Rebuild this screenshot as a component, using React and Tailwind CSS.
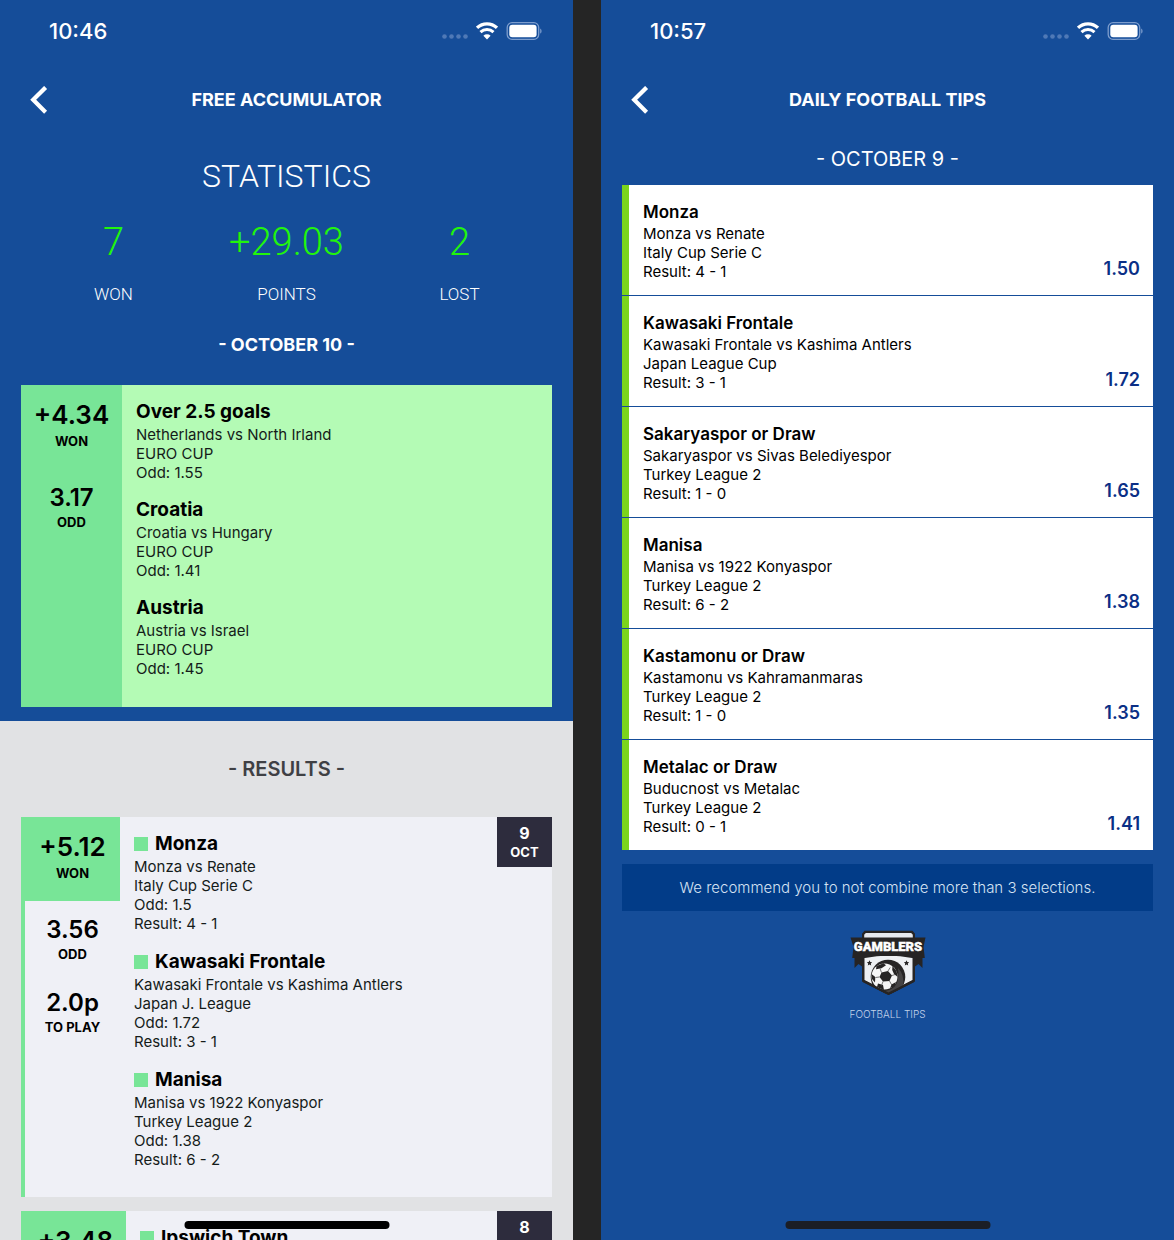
import React from "react";

const accumulator = [
  { title: "Over 2.5 goals", lines: ["Netherlands vs North Irland", "EURO CUP", "Odd: 1.55"] },
  { title: "Croatia", lines: ["Croatia vs Hungary", "EURO CUP", "Odd: 1.41"] },
  { title: "Austria", lines: ["Austria vs Israel", "EURO CUP", "Odd: 1.45"] },
];

const results = [
  {
    won: "+5.12",
    odd: "3.56",
    stake: "2.0p",
    day: "9",
    month: "OCT",
    column: "w-[99px]",
    picks: [
      { title: "Monza", lines: ["Monza vs Renate", "Italy Cup Serie C", "Odd: 1.5", "Result: 4 - 1"] },
      { title: "Kawasaki Frontale", lines: ["Kawasaki Frontale vs Kashima Antlers", "Japan J. League", "Odd: 1.72", "Result: 3 - 1"] },
      { title: "Manisa", lines: ["Manisa vs 1922 Konyaspor", "Turkey League 2", "Odd: 1.38", "Result: 6 - 2"] },
    ],
  },
  {
    won: "+3.48",
    day: "8",
    month: "OCT",
    column: "w-[105px]",
    picks: [{ title: "Ipswich Town", lines: [] }],
  },
];

const tips = [
  { title: "Monza", lines: ["Monza vs Renate", "Italy Cup Serie C", "Result: 4 - 1"], odd: "1.50" },
  { title: "Kawasaki Frontale", lines: ["Kawasaki Frontale vs Kashima Antlers", "Japan League Cup", "Result: 3 - 1"], odd: "1.72" },
  { title: "Sakaryaspor or Draw", lines: ["Sakaryaspor vs Sivas Belediyespor", "Turkey League 2", "Result: 1 - 0"], odd: "1.65" },
  { title: "Manisa", lines: ["Manisa vs 1922 Konyaspor", "Turkey League 2", "Result: 6 - 2"], odd: "1.38" },
  { title: "Kastamonu or Draw", lines: ["Kastamonu vs Kahramanmaras", "Turkey League 2", "Result: 1 - 0"], odd: "1.35" },
  { title: "Metalac or Draw", lines: ["Buducnost vs Metalac", "Turkey League 2", "Result: 0 - 1"], odd: "1.41" },
];

function StatusBar({ time }) {
  return (
    <div className="flex h-[62px] shrink-0 items-center justify-between pl-[49px] pr-[31px] text-white">
      <span className="text-[22px] leading-7 font-medium">{time}</span>
      <div className="flex items-center gap-2">
        <svg width="26" height="20" viewBox="0 0 26 20" fill="#4f79b6" aria-hidden="true">
          <circle cx="2.5" cy="15.5" r="2.3" />
          <circle cx="9.5" cy="15.5" r="2.3" />
          <circle cx="16.5" cy="15.5" r="2.3" />
          <circle cx="23.5" cy="15.5" r="2.3" />
        </svg>
        <svg width="22" height="20" viewBox="0 0 22 20" fill="none" stroke="#fff" aria-hidden="true">
          <path d="M1 6.800a14.600 14.600 0 0 1 20 0" strokeWidth="3.4" />
          <path d="M4.500 11.200a9.400 9.400 0 0 1 13 0" strokeWidth="3" />
          <path d="M11 18.400 7.400 14.800a5.200 5.200 0 0 1 7.200 0z" fill="#fff" stroke="none" />
        </svg>
        <svg width="36" height="20" viewBox="0 0 36 20" fill="none" aria-hidden="true">
          <rect x="1.2" y="1.700" width="31.500" height="16.600" rx="4.8" stroke="#7d9dcd" strokeWidth="1.3" />
          <rect x="3.300" y="3.800" width="27.300" height="12.400" rx="3" fill="#fff" />
          <path d="M34.200 7.400c1.800.8 1.800 4.400 0 5.200z" fill="#7d9dcd" />
        </svg>
      </div>
    </div>
  );
}

function Header({ title }) {
  return (
    <header className="grid h-[76px] shrink-0 grid-cols-[48px_1fr_48px] items-center text-white">
      <button type="button" aria-label="Back" className="flex justify-end">
        <svg width="18" height="28" viewBox="0 0 18 28" fill="none" stroke="#fff" strokeWidth="4.2" aria-hidden="true">
          <path d="M15.600 1.400 3.200 13.800l12.400 12.400" />
        </svg>
      </button>
      <h1 className="text-center text-lg font-bold">{title}</h1>
    </header>
  );
}

function HomeIndicator({ color }) {
  return <div className={`absolute bottom-[11px] left-1/2 h-2 w-[205px] -translate-x-1/2 rounded-full ${color}`} />;
}

function Stat({ value, label }) {
  return (
    <div className="flex flex-col items-center gap-5 font-['Roboto']">
      <span className="text-[38px] leading-10 font-light text-[#22f50c]">{value}</span>
      <span className="text-[17px] leading-6 font-light">{label}</span>
    </div>
  );
}

function Figure({ value, label, size }) {
  return (
    <div className="flex flex-col items-center font-semibold">
      <span className={size}>{value}</span>
      <span className="text-[13px] leading-5 font-bold">{label}</span>
    </div>
  );
}

function Pick({ title, lines, marked }) {
  return (
    <div>
      <h3 className="mb-px flex items-center gap-[7px] text-[19px] leading-6 font-bold">
        {marked && <span className="size-3.5 bg-[#78e597]" />}
        {title}
      </h3>
      {lines.map((line) => (
        <p key={line} className="text-[15px] leading-[19px] text-[#151c1a]">{line}</p>
      ))}
    </div>
  );
}

function ResultCard({ won, odd, stake, day, month, column, picks }) {
  return (
    <article className="flex min-h-[380px] shrink-0 border-l-4 border-[#78e597] bg-[#eff0f6]">
      <div className={`-ml-1 flex shrink-0 flex-col ${column}`}>
        <div className="h-[84px] bg-[#78e597] pt-3.5 pl-1">
          <Figure value={won} label="WON" size="text-[26px] leading-8" />
        </div>
        {odd && (
          <div className="flex flex-col gap-[25px] pt-[15px] pl-1">
            <Figure value={odd} label="ODD" size="text-2xl leading-7" />
            <Figure value={stake} label="TO PLAY" size="text-2xl leading-7" />
          </div>
        )}
      </div>
      <div className="flex flex-1 flex-col gap-[17px] pt-[15px] pl-3.5">
        {picks.map((p) => (
          <Pick key={p.title} {...p} marked />
        ))}
      </div>
      <div className="flex h-[50px] w-[55px] flex-col items-center justify-center bg-[#2d2c3d] font-bold text-white">
        <span className="text-base leading-5">{day}</span>
        <span className="text-[13px] leading-[18px]">{month}</span>
      </div>
    </article>
  );
}

function Logo() {
  return (
    <svg width="78" height="66" viewBox="0 0 78 66" role="img" aria-label="Gamblers">
      <defs>
        <clipPath id="shield">
          <path d="M13 27h53v24.500L39.500 65 13 51.500z" />
        </clipPath>
      </defs>
      <path d="M15.500.8h48l2.500 3v47.700L39.500 65 13 51.500V3.800z" fill="#262424" />
      <path d="M16.800 3h45.400l1.600 1.800V9H15.200V4.800z" fill="#e6e9ee" />
      <path d="M15.500 26h48v24L39.500 62.300 15.500 50z" fill="#eef0f3" />
      <path d="M5.500 26H13v10.500L9.500 34l-4 4zM73.500 26H66v10.500l3.500-2.500 4 4z" fill="#262424" />
      <path d="M1.500 7.500h75L74.500 17l1.300 11H63q-23.500-5-47 0H3.200l1.300-11z" fill="#262424" />
      <text x="39" y="21" textAnchor="middle" fontFamily="Roboto" fontWeight="900" fontSize="13" fill="#fff" stroke="#fff" strokeWidth="0.4">GAMBLERS</text>
      <path d="m20.500 30.300.8 1.700 1.900.2-1.400 1.300.4 1.900-1.700-1-1.700 1 .4-1.900-1.400-1.300 1.900-.2zM57.500 30.300l.8 1.700 1.900.2-1.400 1.300.4 1.900-1.700-1-1.700 1 .4-1.900-1.400-1.300 1.900-.2z" fill="#262424" />
      <g clipPath="url(#shield)">
        <circle cx="39" cy="47" r="17.300" fill="#262424" />
        <path d="M49 38q7 7 5 19l-16 8-5-4q14 0 16-12 1-6 0-11z" fill="#454344" />
        <circle cx="35.500" cy="46.500" r="13" fill="#f6f6f6" />
        <path d="m32.500 42.500 6.500-1.500 4 4.500-2.500 5.500-6.500.5-3.500-4.500zM27.500 36l7-2.800 2.500 2-4.500 3-5.500 1zM43.500 36l4 5 1.200 6-3.700-3-1.800-4zM22.500 44l3.800 3-.3 5.500-3-3.500zM28 57l1-3.500 5 1.500 1 5zM41 58.500l1.500-4 4.500-2.500-1.500 4z" fill="#262424" />
        <path d="m32.500 42.500-1.500-4m8 2.500 2.200-3.500M43 45.500l3-1m-5.500 6.500 2.300 4m-8.800-3.500-1.500 4m-2-8.500-4 .5" stroke="#555" strokeWidth="0.8" fill="none" />
      </g>
      <path d="M14.200 51 39.500 63.700 64.800 51" fill="none" stroke="#262424" strokeWidth="2.4" />
    </svg>
  );
}

export default function App() {
  return (
    <main className="grid h-screen grid-cols-2 gap-7 overflow-hidden bg-[#252525] font-['Inter',sans-serif] text-black">
      <section className="relative flex min-h-0 flex-col overflow-hidden bg-[#e1e2e4]">
        <div className="shrink-0 bg-[#154d99] pb-3.5">
          <StatusBar time="10:46" />
          <Header title="FREE ACCUMULATOR" />
          <div className="px-[27px] pt-[18px] text-center text-white">
            <h2 className="font-['Roboto'] text-[32px] leading-10 font-light">STATISTICS</h2>
            <div className="mt-[26px] grid grid-cols-3">
              <Stat value="7" label="WON" />
              <Stat value="+29.03" label="POINTS" />
              <Stat value="2" label="LOST" />
            </div>
            <h2 className="mt-[27px] text-lg leading-6 font-bold">- OCTOBER 10 -</h2>
          </div>
          <article className="mx-[21px] mt-7 flex bg-[#b4fbb5]">
            <div className="flex w-[101px] flex-col gap-[33px] bg-[#78e597] pt-3.5">
              <Figure value="+4.34" label="WON" size="text-[26px] leading-8" />
              <Figure value="3.17" label="ODD" size="text-2xl leading-7" />
            </div>
            <div className="flex flex-col gap-4 pt-[15px] pb-[29px] pl-3.5">
              {accumulator.map((p) => (
                <Pick key={p.title} {...p} />
              ))}
            </div>
          </article>
        </div>
        <h2 className="mt-8 shrink-0 text-center text-xl leading-8 font-semibold text-[#3f4044]">- RESULTS -</h2>
        <div className="mx-[21px] mt-8 flex flex-col gap-3.5">
          {results.map((r) => (
            <ResultCard key={r.won} {...r} />
          ))}
        </div>
        <HomeIndicator color="bg-black" />
      </section>

      <section className="relative flex min-h-0 flex-col overflow-hidden bg-[#154d99]">
        <StatusBar time="10:57" />
        <Header title="DAILY FOOTBALL TIPS" />
        <h2 className="mt-[7px] text-center text-xl leading-7 text-white">- OCTOBER 9 -</h2>
        <ul className="mx-[21px] mt-3 flex flex-col gap-px">
          {tips.map((t) => (
            <li key={t.title} className="flex h-[110px] items-end justify-between border-l-[7px] border-[#7bd51c] bg-white pr-[13px] pb-3.5 pl-3.5">
              <div>
                <h3 className="text-[17px] leading-6 font-semibold">{t.title}</h3>
                {t.lines.map((line) => (
                  <p key={line} className="text-[15px] leading-[19px]">{line}</p>
                ))}
              </div>
              <span className="text-lg leading-6 font-semibold text-[#0b2f86]">{t.odd}</span>
            </li>
          ))}
        </ul>
        <p className="mx-[21px] mt-3.5 bg-[#023c88] py-3 text-center text-[15px] leading-[23px] font-light text-[#d5e2f3]">
          We recommend you to not combine more than 3 selections.
        </p>
        <div className="mt-[19px] flex flex-col items-center gap-2.5">
          <Logo />
          <span className="text-[10px] leading-4 font-light text-[#c3d3ea]">FOOTBALL TIPS</span>
        </div>
        <HomeIndicator color="bg-[#1b1e26]" />
      </section>
    </main>
  );
}
